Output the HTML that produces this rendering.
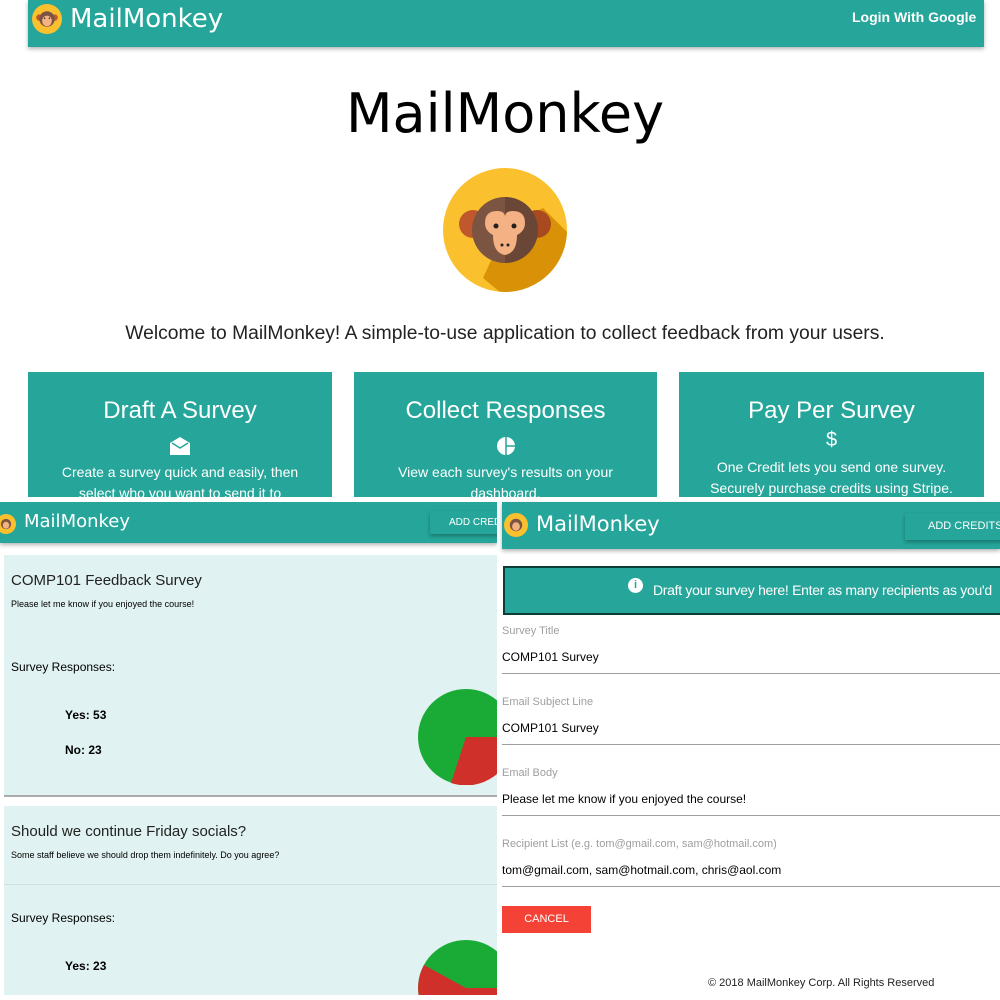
<!DOCTYPE html>
<html><head><meta charset="utf-8"><style>
*{margin:0;padding:0;box-sizing:border-box}
body{width:1000px;height:1000px;background:#fff;position:relative;overflow:hidden;font-family:"Liberation Sans",sans-serif;color:#000}
.a{position:absolute}
.teal{background:#26a69a}
.card{position:absolute;top:372px;height:125px;background:#26a69a;color:#fff;text-align:center;overflow:hidden}
.card h3{font-weight:300;font-size:24px;margin-top:25px}
.card p{font-size:14px;line-height:21px;margin-top:8px}
.shadow{box-shadow:0 2px 4px rgba(0,0,0,.3)}
.lbl{position:absolute;left:502px;font-size:11px;color:#9e9e9e}
.val{position:absolute;left:502px;font-size:12px;color:#000}
.line{position:absolute;left:502px;width:498px;height:1px;background:#9e9e9e}
</style></head><body>
<div class="a teal shadow" style="left:28px;top:0;width:956px;height:47px"></div>
<svg class="a" style="left:32px;top:4px" width="30" height="30" viewBox="0 0 124 124"><circle cx="62" cy="62" r="62" fill="#fbc02d"/><circle cx="30" cy="56" r="13" fill="#c0582e"/><circle cx="94" cy="56" r="13" fill="#c0582e"/><circle cx="62" cy="62" r="32" fill="#7b5442"/><ellipse cx="62" cy="70" rx="20" ry="22" fill="#f4b183"/><circle cx="52" cy="59" r="3" fill="#222"/><circle cx="72" cy="59" r="3" fill="#222"/></svg>
<div class="a" style="left:70px;top:4px;font-size:26px;color:#fff;font-family:'DejaVu Sans',sans-serif">MailMonkey</div>
<div class="a" style="left:852px;top:9px;font-size:14px;font-weight:bold;color:#fff">Login With Google</div>
<div class="a" style="left:0;top:82px;width:1010px;text-align:center;font-size:54px;font-family:'DejaVu Sans',sans-serif">MailMonkey</div>
<svg class="a" style="left:443px;top:168px" width="124" height="124" viewBox="0 0 124 124"><defs><clipPath id="c"><circle cx="62" cy="62" r="62"/></clipPath></defs><circle cx="62" cy="62" r="62" fill="#fbc02d"/><polygon points="62,62 100,40 160,100 100,160 40,110" fill="#d99107" clip-path="url(#c)"/><circle cx="30" cy="56" r="14" fill="#c0582e"/><circle cx="94" cy="56" r="14" fill="#a8491f"/><circle cx="62" cy="62" r="33" fill="#7b5442"/><path d="M62 29a33 33 0 0 1 0 66z" fill="#6a4636"/><path d="M42 55q0-12 12-12q8 0 8 6q0-6 8-6q12 0 12 12q0 8-8 12q0 18-12 20q-12-2-12-20q-8-4-8-12z" fill="#f4b183"/><circle cx="53" cy="58" r="2.5" fill="#222"/><circle cx="71" cy="58" r="2.5" fill="#222"/><circle cx="59" cy="77" r="1.5" fill="#222"/><circle cx="65" cy="77" r="1.5" fill="#222"/></svg>
<div class="a" style="left:0;top:323px;width:1010px;text-align:center;font-size:19.3px;color:#222">Welcome to MailMonkey! A simple-to-use application to collect feedback from your users.</div>
<div class="card" style="left:28px;width:304px"><h3>Draft A Survey</h3><svg style="display:block;margin:12px auto 0" width="20" height="18" viewBox="0 0 20 18"><path d="M10 0L20 6V18H0V6Z" fill="#fff"/><path d="M2 6L10 11L18 6" stroke="#26a69a" stroke-width="1.5" fill="none"/></svg><p style="margin-top:7px">Create a survey quick and easily, then<br>select who you want to send it to</p></div>
<div class="card" style="left:354px;width:303px"><h3>Collect Responses</h3><svg style="display:block;margin:12px auto 0" width="18" height="18" viewBox="0 0 18 18"><circle cx="9" cy="9" r="9" fill="#fff"/><path d="M9 9V0M9 9H18M9 9L9 18" stroke="#26a69a" stroke-width="1.5"/></svg><p style="margin-top:7px">View each survey's results on your<br>dashboard.</p></div>
<div class="card" style="left:679px;width:305px"><h3>Pay Per Survey</h3><p style="font-size:20px;margin-top:4px;line-height:22px">$</p><p style="margin-top:6px">One Credit lets you send one survey.<br>Securely purchase credits using Stripe.</p></div>
<div class="a" style="left:0;top:498px;width:1000px;height:4px;background:#fff"></div>
<div class="a" style="left:0;top:502px;width:497px;height:498px;overflow:hidden">
<div class="a teal shadow" style="left:0;top:0;width:497px;height:41px"></div>
<svg class="a" style="left:-4px;top:12px" width="20" height="20" viewBox="0 0 124 124"><circle cx="62" cy="62" r="62" fill="#fbc02d"/><circle cx="62" cy="62" r="32" fill="#7b5442"/><ellipse cx="62" cy="70" rx="20" ry="22" fill="#f4b183"/></svg>
<div class="a" style="left:24px;top:9px;font-size:18px;color:#fff;font-family:'DejaVu Sans',sans-serif">MailMonkey</div>
<div class="a shadow" style="left:430px;top:9px;width:90px;height:23px;background:#26a69a;color:#fff;font-size:10px;padding:6px 0 0 19px;white-space:nowrap">ADD CREDITS</div>
<div class="a" style="left:4px;top:53px;width:493px;height:242px;background:#e0f2f1;border-bottom:2px solid #aaa"></div>
<div class="a" style="left:11px;top:70px;font-size:15px;color:#222">COMP101 Feedback Survey</div>
<div class="a" style="left:11px;top:97px;font-size:9px">Please let me know if you enjoyed the course!</div>
<div class="a" style="left:11px;top:158px;font-size:12px">Survey Responses:</div>
<div class="a" style="left:65px;top:206px;font-size:12px;font-weight:bold">Yes: 53</div>
<div class="a" style="left:65px;top:241px;font-size:12px;font-weight:bold">No: 23</div>
<svg class="a" style="left:418px;top:187px" width="96" height="96"><circle cx="48" cy="48" r="48" fill="#1aab36"/><path d="M48 48H96A48 48 0 0 1 33 94Z" fill="#cf3029"/></svg>
<div class="a" style="left:4px;top:304px;width:493px;height:196px;background:#e0f2f1"></div>
<div class="a" style="left:4px;top:382px;width:493px;height:1px;background:#cfe0de"></div>
<div class="a" style="left:11px;top:321px;font-size:15px;color:#222">Should we continue Friday socials?</div>
<div class="a" style="left:11px;top:348px;font-size:9px">Some staff believe we should drop them indefinitely. Do you agree?</div>
<div class="a" style="left:11px;top:409px;font-size:12px">Survey Responses:</div>
<div class="a" style="left:65px;top:457px;font-size:12px;font-weight:bold">Yes: 23</div>
<svg class="a" style="left:418px;top:438px" width="96" height="96"><circle cx="48" cy="48" r="48" fill="#1aab36"/><path d="M48 48L6 25A48 48 0 0 0 48 96Z M48 48H96V96H48Z" fill="#cf3029"/></svg>
<div class="a" style="left:0;top:493px;width:497px;height:10px;background:#fff"></div>
</div>
<div class="a" style="left:497px;top:502px;width:5px;height:498px;background:#fff"></div>
<div class="a teal shadow" style="left:502px;top:502px;width:498px;height:47px"></div>
<svg class="a" style="left:504px;top:513px" width="24" height="24" viewBox="0 0 124 124"><circle cx="62" cy="62" r="62" fill="#fbc02d"/><circle cx="62" cy="62" r="32" fill="#7b5442"/><ellipse cx="62" cy="70" rx="20" ry="22" fill="#f4b183"/></svg>
<div class="a" style="left:536px;top:512px;font-size:21px;color:#fff;font-family:'DejaVu Sans',sans-serif">MailMonkey</div>
<div class="a shadow" style="left:905px;top:513px;width:100px;height:27px;background:#26a69a;color:#fff;font-size:11px;padding:7px 0 0 23px;white-space:nowrap">ADD CREDITS</div>
<div class="a" style="left:503px;top:566px;width:497px;height:49px;background:#26a69a;border:2px solid #0d3b35;border-right:none"></div>
<div class="a" style="left:628px;top:578px;width:15px;height:15px;border-radius:50%;background:#fff;color:#26a69a;font-size:11px;font-weight:bold;text-align:center;line-height:15px">i</div>
<div class="a" style="left:653px;top:582px;font-size:14px;color:#fff;white-space:nowrap;letter-spacing:-0.3px">Draft your survey here! Enter as many recipients as you'd</div>
<div class="lbl" style="top:625px">Survey Title</div>
<div class="val" style="top:650px">COMP101 Survey</div>
<div class="line" style="top:673px"></div>
<div class="lbl" style="top:696px">Email Subject Line</div>
<div class="val" style="top:721px">COMP101 Survey</div>
<div class="line" style="top:744px"></div>
<div class="lbl" style="top:767px">Email Body</div>
<div class="val" style="top:792px">Please let me know if you enjoyed the course!</div>
<div class="line" style="top:815px"></div>
<div class="lbl" style="top:838px">Recipient List (e.g. tom@gmail.com, sam@hotmail.com)</div>
<div class="val" style="top:863px">tom@gmail.com, sam@hotmail.com, chris@aol.com</div>
<div class="line" style="top:886px"></div>
<div class="a" style="left:502px;top:906px;width:89px;height:27px;background:#f44336;color:#fff;font-size:11px;text-align:center;line-height:27px">CANCEL</div>
<div class="a" style="left:708px;top:977px;font-size:11px;color:#222">© 2018 MailMonkey Corp. All Rights Reserved</div>
</body></html>
